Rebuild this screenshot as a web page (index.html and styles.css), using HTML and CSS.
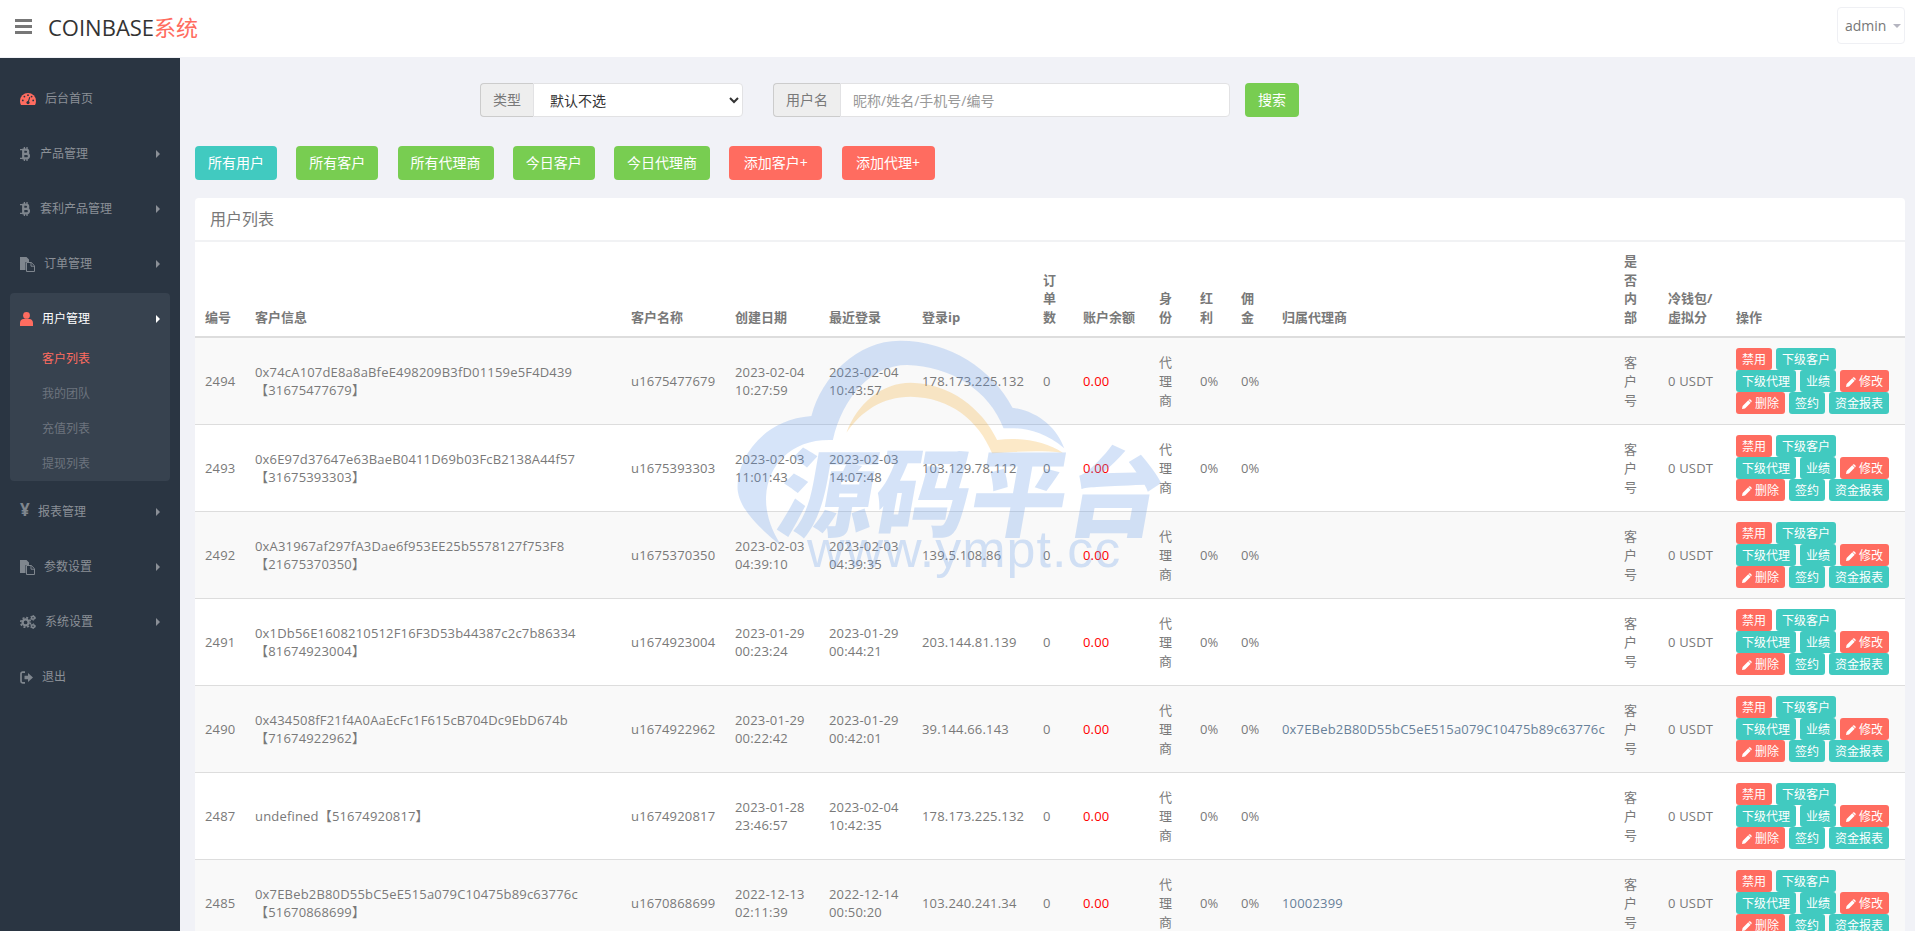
FILE: index.html
```html
<!DOCTYPE html>
<html lang="zh">
<head>
<meta charset="utf-8">
<meta name="viewport" content="width=device-width, initial-scale=1">
<title>COINBASE系统</title>
<link rel="stylesheet" href="styles.css">
</head>
<body>

<svg class="icon-defs" xmlns="http://www.w3.org/2000/svg">
  <symbol id="i-gauge" viewBox="0 0 16 12">
    <path fill="currentColor" d="M8 0a8 8 0 0 0-8 8c0 1.5.4 2.9 1 4h14c.6-1.1 1-2.5 1-4a8 8 0 0 0-8-8z"/>
    <g fill="#2a3542"><circle cx="2.8" cy="7.4" r=".9"/><circle cx="4.4" cy="3.6" r=".9"/><circle cx="8" cy="2.2" r=".9"/><circle cx="13.2" cy="7.4" r=".9"/><circle cx="11.6" cy="3.6" r=".9"/><circle cx="8" cy="9.6" r="1.6"/></g>
    <path stroke="#2a3542" stroke-width="1.1" d="M8 9.6l1.8-5.4"/>
  </symbol>
  <symbol id="i-btc" viewBox="0 0 11 14">
    <g fill="none" stroke="currentColor">
      <path stroke-width="2.2" d="M2.5 2.6h3.6a2.1 2.1 0 0 1 0 4.2H2.5M2.5 6.8h4.2a2.3 2.3 0 0 1 0 4.6H2.5"/>
      <path stroke-width="2.2" d="M3.2 2v9.9"/>
      <path stroke-width="1.3" d="M4.4 0v2.4M7 0v2.4M4.4 11.600V14M7 11.600V14M0 2.600h2.500M0 11.400h2.500"/>
    </g>
  </symbol>
  <symbol id="i-files" viewBox="0 0 15 15">
    <path fill="currentColor" d="M0 0h6.5L9 2.5V5H5.5v8H0z"/>
    <path fill="none" stroke="currentColor" d="M6.5 5.5h4.8l3.2 3.2v5.8h-8zM11 5.5v3.7h3.5"/>
  </symbol>
  <symbol id="i-user" viewBox="0 0 13 14">
    <circle cx="6.5" cy="3.4" r="3.4" fill="currentColor"/>
    <path fill="currentColor" d="M0 14v-3c0-2.5 1.8-4 3.4-4h6.2c1.6 0 3.4 1.500 3.400 4v3z"/>
  </symbol>
  <symbol id="i-cogs" viewBox="0 0 16 14">
    <g fill="none" stroke="currentColor">
      <circle cx="5.600" cy="7.400" r="3" stroke-width="2.300"/>
      <circle cx="5.600" cy="7.400" r="4.800" stroke-width="1.700" stroke-dasharray="2 1.770"/>
      <circle cx="13" cy="2.800" r="1.500" stroke-width="1.500"/>
      <circle cx="13" cy="2.800" r="2.400" stroke-width="1" stroke-dasharray="1.200 1.310"/>
      <circle cx="13" cy="11.200" r="1.500" stroke-width="1.500"/>
      <circle cx="13" cy="11.200" r="2.400" stroke-width="1" stroke-dasharray="1.200 1.310"/>
    </g>
  </symbol>
  <symbol id="i-signout" viewBox="0 0 13 13">
    <path fill="none" stroke="currentColor" stroke-width="1.700" d="M5 1.200H2.600A1.600 1.600 0 0 0 1 2.800v7.400a1.600 1.600 0 0 0 1.600 1.600H5"/>
    <path fill="currentColor" d="M4.500 4.800h3.500V2l5 4.500L8 11V8.200H4.500z"/>
  </symbol>
  <symbol id="i-pencil" viewBox="0 0 10 10">
    <path fill="currentColor" d="M0 10l.6-3L6.300 1.300 8.700 3.700 3 9.400zM7 .6a1 1 0 0 1 1.400 0l1 1a1 1 0 0 1 0 1.400l-.3.300L6.700.9z"/>
  </symbol>
</svg>

<div class="header">
  <div class="menu-toggle"><span></span><span></span><span></span></div>
  <div class="logo">COINBASE<span class="logo-red">系统</span></div>
  <div class="user-box">admin<i class="caret"></i></div>
</div>

<div class="wrap">
  <div class="sidebar">
    <ul class="nav">
      <li><a class="nav-link"><svg class="ico ico-gauge red"><use href="#i-gauge"/></svg>后台首页</a></li>
      <li><a class="nav-link"><svg class="ico ico-btc"><use href="#i-btc"/></svg>产品管理<i class="arrow"></i></a></li>
      <li><a class="nav-link"><svg class="ico ico-btc"><use href="#i-btc"/></svg>套利产品管理<i class="arrow"></i></a></li>
      <li><a class="nav-link"><svg class="ico ico-files"><use href="#i-files"/></svg>订单管理<i class="arrow"></i></a></li>
      <li class="open">
        <a class="nav-link"><svg class="ico ico-user red"><use href="#i-user"/></svg>用户管理<i class="arrow"></i></a>
        <ul class="sub">
          <li class="current">客户列表</li>
          <li>我的团队</li>
          <li>充值列表</li>
          <li>提现列表</li>
        </ul>
      </li>
      <li><a class="nav-link"><span class="ico-yen">¥</span>报表管理<i class="arrow"></i></a></li>
      <li><a class="nav-link"><svg class="ico ico-files"><use href="#i-files"/></svg>参数设置<i class="arrow"></i></a></li>
      <li><a class="nav-link"><svg class="ico ico-cogs"><use href="#i-cogs"/></svg>系统设置<i class="arrow"></i></a></li>
      <li><a class="nav-link"><svg class="ico ico-signout"><use href="#i-signout"/></svg>退出</a></li>
    </ul>
  </div>

  <div class="main">
    <div class="filter">
      <div class="input-group group-type">
        <span class="addon">类型</span>
        <select class="field"><option>默认不选</option></select>
      </div>
      <div class="input-group group-name">
        <span class="addon">用户名</span>
        <input class="field" type="text" placeholder="昵称/姓名/手机号/编号">
      </div>
      <button class="btn green">搜索</button>
    </div>

    <div class="quick">
      <button class="btn teal">所有用户</button>
      <button class="btn green">所有客户</button>
      <button class="btn green">所有代理商</button>
      <button class="btn green">今日客户</button>
      <button class="btn green">今日代理商</button>
      <button class="btn red-btn wide">添加客户+</button>
      <button class="btn red-btn wide">添加代理+</button>
    </div>

    <div class="panel">
      <div class="panel-title">用户列表</div>
      <table class="list">
        <colgroup>
          <col class="c-id"><col class="c-info"><col class="c-name"><col class="c-date"><col class="c-login"><col class="c-ip">
          <col class="c-orders"><col class="c-balance"><col class="c-narrow"><col class="c-narrow"><col class="c-narrow">
          <col class="c-agent"><col class="c-inner"><col class="c-cold"><col class="c-ops">
        </colgroup>
        <thead>
          <tr>
            <th>编号</th><th>客户信息</th><th>客户名称</th><th>创建日期</th><th>最近登录</th><th>登录ip</th>
            <th>订单数</th><th>账户余额</th><th>身份</th><th>红利</th><th>佣金</th><th>归属代理商</th>
            <th>是否内部</th><th>冷钱包/虚拟分</th><th>操作</th>
          </tr>
        </thead>
        <tbody>
          <tr>
            <td>2494</td><td>0x74cA107dE8a8aBfeE498209B3fD01159e5F4D439【31675477679】</td><td>u1675477679</td>
            <td>2023-02-04 10:27:59</td><td>2023-02-04 10:43:57</td><td>178.173.225.132</td>
            <td>0</td><td class="money">0.00</td><td>代理商</td><td>0%</td><td>0%</td><td class="agent"></td><td>客户号</td><td>0 USDT</td>
            <td><div class="ops">
              <a class="mini red-btn">禁用</a><a class="mini teal">下级客户</a><a class="mini teal">下级代理</a><a class="mini teal">业绩</a>
              <a class="mini red-btn"><svg class="pencil"><use href="#i-pencil"/></svg>修改</a><a class="mini red-btn"><svg class="pencil"><use href="#i-pencil"/></svg>删除</a><a class="mini teal">签约</a><a class="mini teal">资金报表</a>
            </div></td>
          </tr>
          <tr>
            <td>2493</td><td>0x6E97d37647e63BaeB0411D69b03FcB2138A44f57【31675393303】</td><td>u1675393303</td>
            <td>2023-02-03 11:01:43</td><td>2023-02-03 14:07:48</td><td>103.129.78.112</td>
            <td>0</td><td class="money">0.00</td><td>代理商</td><td>0%</td><td>0%</td><td class="agent"></td><td>客户号</td><td>0 USDT</td>
            <td><div class="ops">
              <a class="mini red-btn">禁用</a><a class="mini teal">下级客户</a><a class="mini teal">下级代理</a><a class="mini teal">业绩</a>
              <a class="mini red-btn"><svg class="pencil"><use href="#i-pencil"/></svg>修改</a><a class="mini red-btn"><svg class="pencil"><use href="#i-pencil"/></svg>删除</a><a class="mini teal">签约</a><a class="mini teal">资金报表</a>
            </div></td>
          </tr>
          <tr>
            <td>2492</td><td>0xA31967af297fA3Dae6f953EE25b5578127f753F8【21675370350】</td><td>u1675370350</td>
            <td>2023-02-03 04:39:10</td><td>2023-02-03 04:39:35</td><td>139.5.108.86</td>
            <td>0</td><td class="money">0.00</td><td>代理商</td><td>0%</td><td>0%</td><td class="agent"></td><td>客户号</td><td>0 USDT</td>
            <td><div class="ops">
              <a class="mini red-btn">禁用</a><a class="mini teal">下级客户</a><a class="mini teal">下级代理</a><a class="mini teal">业绩</a>
              <a class="mini red-btn"><svg class="pencil"><use href="#i-pencil"/></svg>修改</a><a class="mini red-btn"><svg class="pencil"><use href="#i-pencil"/></svg>删除</a><a class="mini teal">签约</a><a class="mini teal">资金报表</a>
            </div></td>
          </tr>
          <tr>
            <td>2491</td><td>0x1Db56E1608210512F16F3D53b44387c2c7b86334【81674923004】</td><td>u1674923004</td>
            <td>2023-01-29 00:23:24</td><td>2023-01-29 00:44:21</td><td>203.144.81.139</td>
            <td>0</td><td class="money">0.00</td><td>代理商</td><td>0%</td><td>0%</td><td class="agent"></td><td>客户号</td><td>0 USDT</td>
            <td><div class="ops">
              <a class="mini red-btn">禁用</a><a class="mini teal">下级客户</a><a class="mini teal">下级代理</a><a class="mini teal">业绩</a>
              <a class="mini red-btn"><svg class="pencil"><use href="#i-pencil"/></svg>修改</a><a class="mini red-btn"><svg class="pencil"><use href="#i-pencil"/></svg>删除</a><a class="mini teal">签约</a><a class="mini teal">资金报表</a>
            </div></td>
          </tr>
          <tr>
            <td>2490</td><td>0x434508fF21f4A0AaEcFc1F615cB704Dc9EbD674b【71674922962】</td><td>u1674922962</td>
            <td>2023-01-29 00:22:42</td><td>2023-01-29 00:42:01</td><td>39.144.66.143</td>
            <td>0</td><td class="money">0.00</td><td>代理商</td><td>0%</td><td>0%</td><td class="agent">0x7EBeb2B80D55bC5eE515a079C10475b89c63776c</td><td>客户号</td><td>0 USDT</td>
            <td><div class="ops">
              <a class="mini red-btn">禁用</a><a class="mini teal">下级客户</a><a class="mini teal">下级代理</a><a class="mini teal">业绩</a>
              <a class="mini red-btn"><svg class="pencil"><use href="#i-pencil"/></svg>修改</a><a class="mini red-btn"><svg class="pencil"><use href="#i-pencil"/></svg>删除</a><a class="mini teal">签约</a><a class="mini teal">资金报表</a>
            </div></td>
          </tr>
          <tr>
            <td>2487</td><td>undefined【51674920817】</td><td>u1674920817</td>
            <td>2023-01-28 23:46:57</td><td>2023-02-04 10:42:35</td><td>178.173.225.132</td>
            <td>0</td><td class="money">0.00</td><td>代理商</td><td>0%</td><td>0%</td><td class="agent"></td><td>客户号</td><td>0 USDT</td>
            <td><div class="ops">
              <a class="mini red-btn">禁用</a><a class="mini teal">下级客户</a><a class="mini teal">下级代理</a><a class="mini teal">业绩</a>
              <a class="mini red-btn"><svg class="pencil"><use href="#i-pencil"/></svg>修改</a><a class="mini red-btn"><svg class="pencil"><use href="#i-pencil"/></svg>删除</a><a class="mini teal">签约</a><a class="mini teal">资金报表</a>
            </div></td>
          </tr>
          <tr>
            <td>2485</td><td>0x7EBeb2B80D55bC5eE515a079C10475b89c63776c【51670868699】</td><td>u1670868699</td>
            <td>2022-12-13 02:11:39</td><td>2022-12-14 00:50:20</td><td>103.240.241.34</td>
            <td>0</td><td class="money">0.00</td><td>代理商</td><td>0%</td><td>0%</td><td class="agent">10002399</td><td>客户号</td><td>0 USDT</td>
            <td><div class="ops">
              <a class="mini red-btn">禁用</a><a class="mini teal">下级客户</a><a class="mini teal">下级代理</a><a class="mini teal">业绩</a>
              <a class="mini red-btn"><svg class="pencil"><use href="#i-pencil"/></svg>修改</a><a class="mini red-btn"><svg class="pencil"><use href="#i-pencil"/></svg>删除</a><a class="mini teal">签约</a><a class="mini teal">资金报表</a>
            </div></td>
          </tr>
        </tbody>
      </table>
    </div>
  </div>
</div>

<!-- watermark over the table -->
<svg class="watermark" xmlns="http://www.w3.org/2000/svg" viewBox="0 0 560 260">
  <g transform="scale(.3571 .3333)">
    <path class="wm-blue" d="M230 620C160 560 105 500 105 440C105 360 170 240 312 228C340 110 440 2 560 2C700 2 820 90 875 203C950 215 1000 265 1020 325C960 270 900 262 850 265C810 150 700 78 580 75C480 75 400 170 372 300C260 295 190 370 185 470C183 530 205 580 230 620z"/>
    <path class="wm-orange" d="M410 278C440 190 510 128 590 128C700 130 790 205 832 300C900 290 970 305 1016 338C950 330 880 335 818 340C780 240 700 172 590 170C510 170 450 215 410 278z"/>
  </g>
  <text class="wm-title" x="0" y="0" transform="translate(74 189) skewX(-10)">源码平台</text>
  <text class="wm-url" x="107" y="227">www.ympt.cc</text>
</svg>

</body>
</html>
```

FILE: styles.css
```css
* {
  box-sizing: border-box;
}

html, body {
  height: 100%;
}

body {
  margin: 0;
  overflow: hidden;
  display: flex;
  flex-direction: column;
  background-color: #f1f2f7;
  color: #797979;
  font-family: "Open Sans", "Noto Sans CJK SC", sans-serif;
  font-size: 13px;
  line-height: 1.42857;
}

.icon-defs {
  display: none;
}

ul {
  list-style: none;
  margin: 0;
  padding: 0;
}

/* Header */
.header {
  flex: none;
  height: 58px;
  display: flex;
  align-items: center;
  padding: 0 10px 4px 15px;
  background-color: #fff;
  border-bottom: 1px solid #f1f2f7;
}

.menu-toggle {
  width: 17px;
  height: 15px;
  margin-right: 16px;
  display: flex;
  flex-direction: column;
  justify-content: space-between;
}

.menu-toggle span {
  height: 3px;
  background-color: #777;
}

.logo {
  color: #333;
  font-size: 22px;
  line-height: 30px;
}

.logo-red {
  color: #ff6c60;
}

.user-box {
  margin-left: auto;
  width: 68px;
  height: 37px;
  margin-top: -2px;
  padding-left: 7px;
  display: flex;
  align-items: center;
  border: 1px solid #eff0f4;
  border-radius: 4px;
  color: #777;
  font-size: 14px;
}

.caret {
  margin-left: 7px;
  border-top: 4px solid #b5b5c0;
  border-left: 4px solid transparent;
  border-right: 4px solid transparent;
}

/* Sidebar */
.wrap {
  flex: 1;
  min-height: 0;
  display: flex;
}

.sidebar {
  flex: none;
  width: 180px;
  padding: 15px 10px 0;
  background-color: #2a3542;
  color: #8b9097;
  font-size: 12px;
}

.nav > li {
  margin-bottom: 5px;
  border-radius: 4px;
}

.nav > li.open {
  background-color: #37424f;
}

.nav-link {
  height: 50px;
  padding: 2px 10px 0;
  display: flex;
  align-items: center;
  gap: 9px;
}

.open .nav-link {
  color: #fff;
}

.ico {
  flex: none;
  color: #7f868e;
}

.ico.red {
  color: #ff6c60;
}

.ico-gauge {
  width: 16px;
  height: 12px;
}

.ico-btc {
  width: 11px;
  height: 14px;
}

.ico-files {
  width: 15px;
  height: 15px;
}

.ico-user {
  width: 13px;
  height: 14px;
}

.ico-cogs {
  width: 16px;
  height: 14px;
}

.ico-signout {
  width: 13px;
  height: 13px;
}

.ico-yen {
  width: 9px;
  color: #7f868e;
  font-size: 17px;
  font-weight: 700;
  margin-top: -4px;
}

.arrow {
  margin-left: auto;
  border-left: 4px solid #8b9097;
  border-top: 4px solid transparent;
  border-bottom: 4px solid transparent;
}

.open .arrow {
  border-left-color: #fff;
}

.sub {
  margin-top: -3px;
  padding-bottom: 1px;
  color: #6d747e;
}

.sub li {
  height: 35px;
  line-height: 37px;
  padding-left: 32px;
}

.sub li.current {
  color: #ff6c60;
}

/* Main area */
.main {
  flex: 1;
  min-width: 0;
  padding: 25px 10px 0 15px;
}

.filter {
  display: flex;
  padding-left: 285px;
}

.input-group {
  display: flex;
  height: 34px;
}

.group-type {
  width: 263px;
  margin-right: 30px;
}

.group-name {
  width: 457px;
  margin-right: 15px;
}

.addon {
  padding: 6px 12px;
  background-color: #eee;
  border: 1px solid #ccc;
  border-right: 0;
  border-radius: 4px 0 0 4px;
  font-size: 14px;
  white-space: nowrap;
}

.field {
  flex: 1;
  min-width: 0;
  padding: 6px 12px;
  background-color: #fff;
  border: 1px solid #e2e2e4;
  border-radius: 0 4px 4px 0;
  color: #333;
  font-family: inherit;
  font-size: 14px;
  outline: none;
}

.field::placeholder {
  color: #999;
}

.btn {
  height: 34px;
  padding: 6px 12px;
  border: 1px solid transparent;
  border-radius: 4px;
  color: #fff;
  font-family: inherit;
  font-size: 14px;
  line-height: 20px;
  white-space: nowrap;
}

.btn.wide {
  width: 93px;
  padding: 6px 0;
}

.green {
  background-color: #78cd51;
}

.teal {
  background-color: #41cac0;
}

.red-btn {
  background-color: #ff6c60;
}

.quick {
  display: flex;
  gap: 19.25px;
  margin-top: 29px;
}

/* Table panel */
.panel {
  margin-top: 18px;
  background-color: #fff;
  border-radius: 4px;
}

.panel-title {
  height: 44px;
  padding: 10px 15px;
  border-bottom: 2px solid #f1f2f4;
  font-size: 16px;
  line-height: 22px;
}

.list {
  width: 100%;
  table-layout: fixed;
  border-collapse: collapse;
}

.c-id { width: 50px; }
.c-info { width: 376px; }
.c-name { width: 104px; }
.c-date { width: 94px; }
.c-login { width: 93px; }
.c-ip { width: 121px; }
.c-orders { width: 40px; }
.c-balance { width: 76px; }
.c-narrow { width: 41px; }
.c-agent { width: 342px; }
.c-inner { width: 44px; }
.c-cold { width: 68px; }
.c-ops { width: 179px; }

.list th {
  padding: 10px;
  border-bottom: 2px solid #ddd;
  text-align: left;
  vertical-align: bottom;
  font-weight: 700;
}

.list td {
  padding: 10px;
  border-top: 1px solid #ddd;
  vertical-align: middle;
  letter-spacing: .18px;
}

.list tbody tr:nth-child(odd) {
  background-color: #f9f9f9;
}

.money {
  color: #f00;
}

.agent {
  color: #688199;
}

.ops {
  display: flex;
  flex-wrap: wrap;
  column-gap: 4px;
}

.mini {
  height: 22px;
  padding: 2px 5px 0;
  display: inline-flex;
  align-items: center;
  border: 1px solid transparent;
  border-radius: 3px;
  color: #fff;
  font-size: 12px;
  line-height: 18px;
  letter-spacing: 0;
}

.pencil {
  width: 10px;
  height: 10px;
  margin-right: 3px;
  color: #fff;
}

/* Watermark */
.watermark {
  position: absolute;
  left: 700px;
  top: 340px;
  width: 560px;
  height: 260px;
  overflow: visible;
  pointer-events: none;
}

.wm-blue,
.wm-title,
.wm-url {
  fill: #5a93e6;
  opacity: .25;
}

.wm-orange {
  fill: #f5a623;
  opacity: .25;
}

.wm-title {
  font-family: "Noto Sans CJK SC", sans-serif;
  font-size: 96px;
  font-weight: 900;
}

.wm-url {
  font-family: "Liberation Sans", sans-serif;
  font-size: 52px;
  letter-spacing: 1px;
}
```
